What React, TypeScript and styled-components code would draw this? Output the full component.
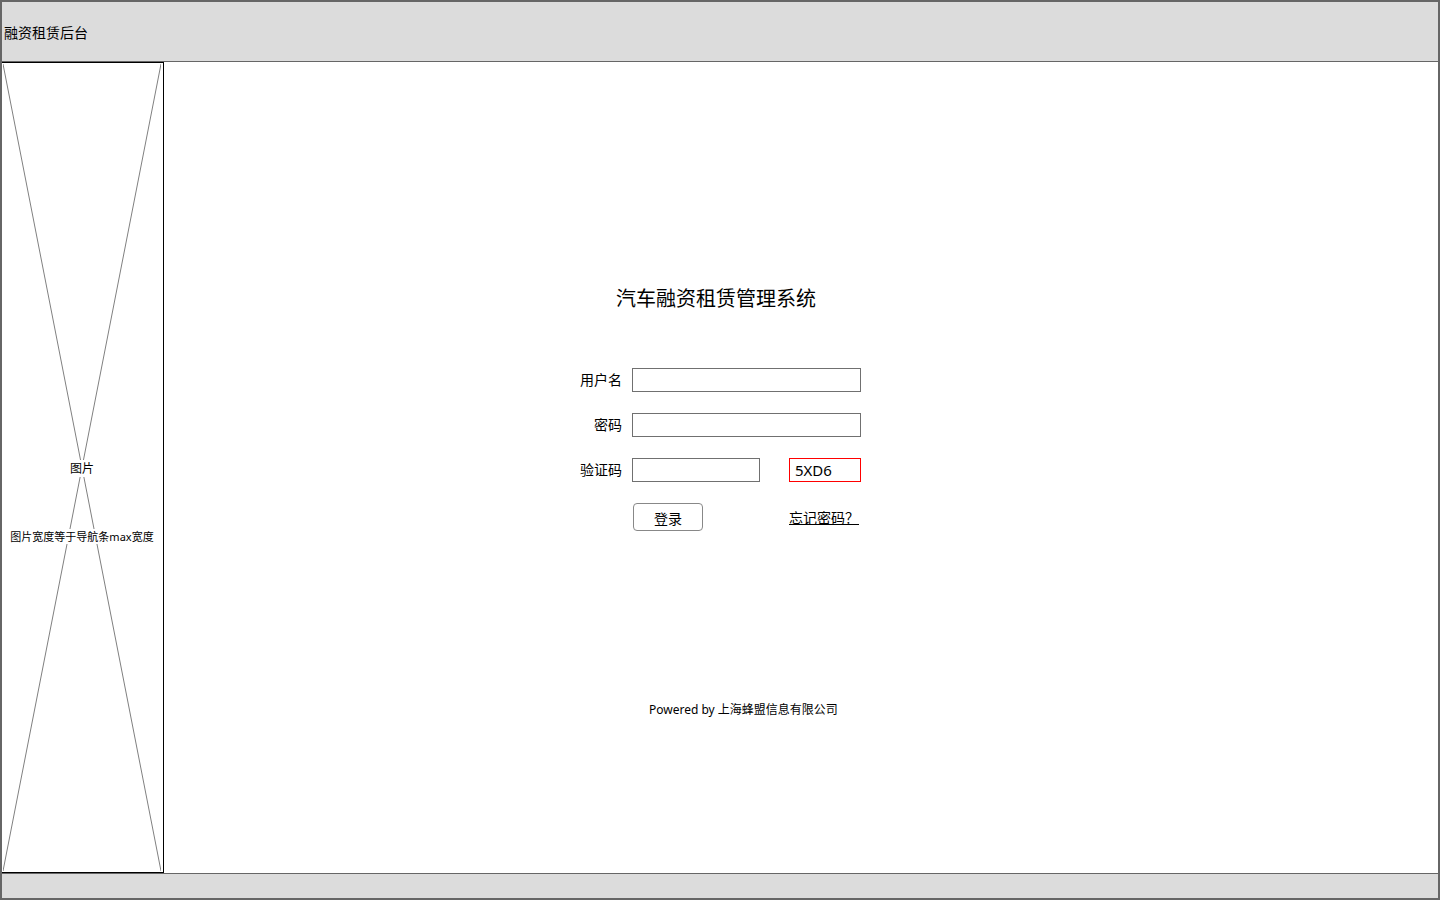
import React from "react";
import styled, { createGlobalStyle } from "styled-components";

const GlobalStyle = createGlobalStyle`
  html, body {
    margin: 0;
    padding: 0;
    background: #ffffff;
  }
  * {
    box-sizing: border-box;
  }
  body {
    font-family: "Noto Sans", "Noto Sans CJK SC", sans-serif;
    color: #000;
  }
`;

const Page = styled.div`
  width: 1440px;
  height: 900px;
  border: 2px solid #666666;
  display: flex;
  flex-direction: column;
  overflow: hidden;
`;

const Header = styled.header`
  height: 60px;
  background: #dcdcdc;
  border-bottom: 1px solid #666666;
  display: flex;
  align-items: center;
  padding: 0 0 0 2px;
  font-size: 14px;
  flex-shrink: 0;
`;

const Body = styled.div`
  flex: 1;
  display: flex;
  min-height: 0;
`;

const Sidebar = styled.aside`
  position: relative;
  width: 164px;
  margin-left: -2px;
  border: 1px solid #000;
  background: #fff;
  flex-shrink: 0;
`;

const Cross = styled.svg`
  position: absolute;
  inset: 1px 2px;
  width: calc(100% - 4px);
  height: calc(100% - 2px);
`;

const PicLabel = styled.span<{ $offset: number; $size: number }>`
  position: absolute;
  left: 0;
  right: 0;
  top: calc(50% + ${({ $offset }) => $offset}px);
  transform: translateY(-50%);
  text-align: center;
  font-size: ${({ $size }) => $size}px;
  line-height: 16px;
  white-space: nowrap;
  span {
    background: #fff;
    padding: 0 1px;
  }
`;

const Main = styled.main`
  flex: 1;
  display: flex;
  flex-direction: column;
  padding: 225px 0 0 398px;
`;

const Column = styled.div`
  width: 298px;
  display: flex;
  flex-direction: column;
`;

const Title = styled.h1`
  margin: 0 0 57px 10px;
  font-size: 20px;
  font-weight: normal;
  line-height: 24px;
  text-align: center;
  white-space: nowrap;
`;

const Form = styled.div`
  display: grid;
  grid-template-columns: 60px 229px;
  column-gap: 10px;
  row-gap: 21px;
  align-items: center;
`;

const Label = styled.label`
  text-align: right;
  font-size: 14px;
  line-height: 24px;
  white-space: nowrap;
`;

const Input = styled.input<{ $width?: number }>`
  width: ${({ $width }) => ($width ? `${$width}px` : "100%")};
  height: 24px;
  border: 1px solid #707070;
  border-radius: 0;
  padding: 0 4px;
  font-size: 14px;
  outline: none;
  background: #fff;
`;

const CaptchaRow = styled.div`
  display: flex;
  align-items: center;
  gap: 29px;
`;

const Captcha = styled.div`
  width: 72px;
  height: 24px;
  border: 1px solid #ff0000;
  display: flex;
  align-items: center;
  padding-left: 5px;
  font-size: 15px;
`;

const Actions = styled.div`
  grid-column: 2;
  display: flex;
  align-items: center;
  justify-content: space-between;
  padding: 0 2px 0 1px;
`;

const LoginButton = styled.button`
  width: 70px;
  height: 28px;
  border: 1px solid #888888;
  border-radius: 4px;
  background: #fff;
  font-family: inherit;
  font-size: 14px;
  padding: 1px 0 0;
  color: #000;
`;

const Forgot = styled.a`
  font-size: 14px;
  color: #000;
  text-decoration: underline;
  margin-top: 0;
`;

const Powered = styled.div`
  margin: 171px 0 0 87px;
  font-size: 12px;
  line-height: 16px;
  white-space: nowrap;
`;

const Footer = styled.footer`
  height: 25px;
  background: #dcdcdc;
  border-top: 1px solid #666666;
  flex-shrink: 0;
`;

export default function App() {
  return (
    <>
      <GlobalStyle />
      <Page>
        <Header>融资租赁后台</Header>
        <Body>
          <Sidebar>
            <Cross viewBox="0 0 100 100" preserveAspectRatio="none">
              <line x1="0" y1="0" x2="100" y2="100" stroke="#808080" strokeWidth="1" vectorEffect="non-scaling-stroke" />
              <line x1="100" y1="0" x2="0" y2="100" stroke="#808080" strokeWidth="1" vectorEffect="non-scaling-stroke" />
            </Cross>
            <PicLabel $offset={1} $size={12}>
              <span>图片</span>
            </PicLabel>
            <PicLabel $offset={69} $size={11}>
              <span>图片宽度等于导航条max宽度</span>
            </PicLabel>
          </Sidebar>
          <Main>
            <Column>
              <Title>汽车融资租赁管理系统</Title>
              <Form>
                <Label>用户名</Label>
                <Input type="text" />
                <Label>密码</Label>
                <Input type="password" />
                <Label>验证码</Label>
                <CaptchaRow>
                  <Input type="text" $width={128} />
                  <Captcha>5XD6</Captcha>
                </CaptchaRow>
                <Actions>
                  <LoginButton>登录</LoginButton>
                  <Forgot>忘记密码？</Forgot>
                </Actions>
              </Form>
              <Powered>Powered by 上海蜂盟信息有限公司</Powered>
            </Column>
          </Main>
        </Body>
        <Footer />
      </Page>
    </>
  );
}
